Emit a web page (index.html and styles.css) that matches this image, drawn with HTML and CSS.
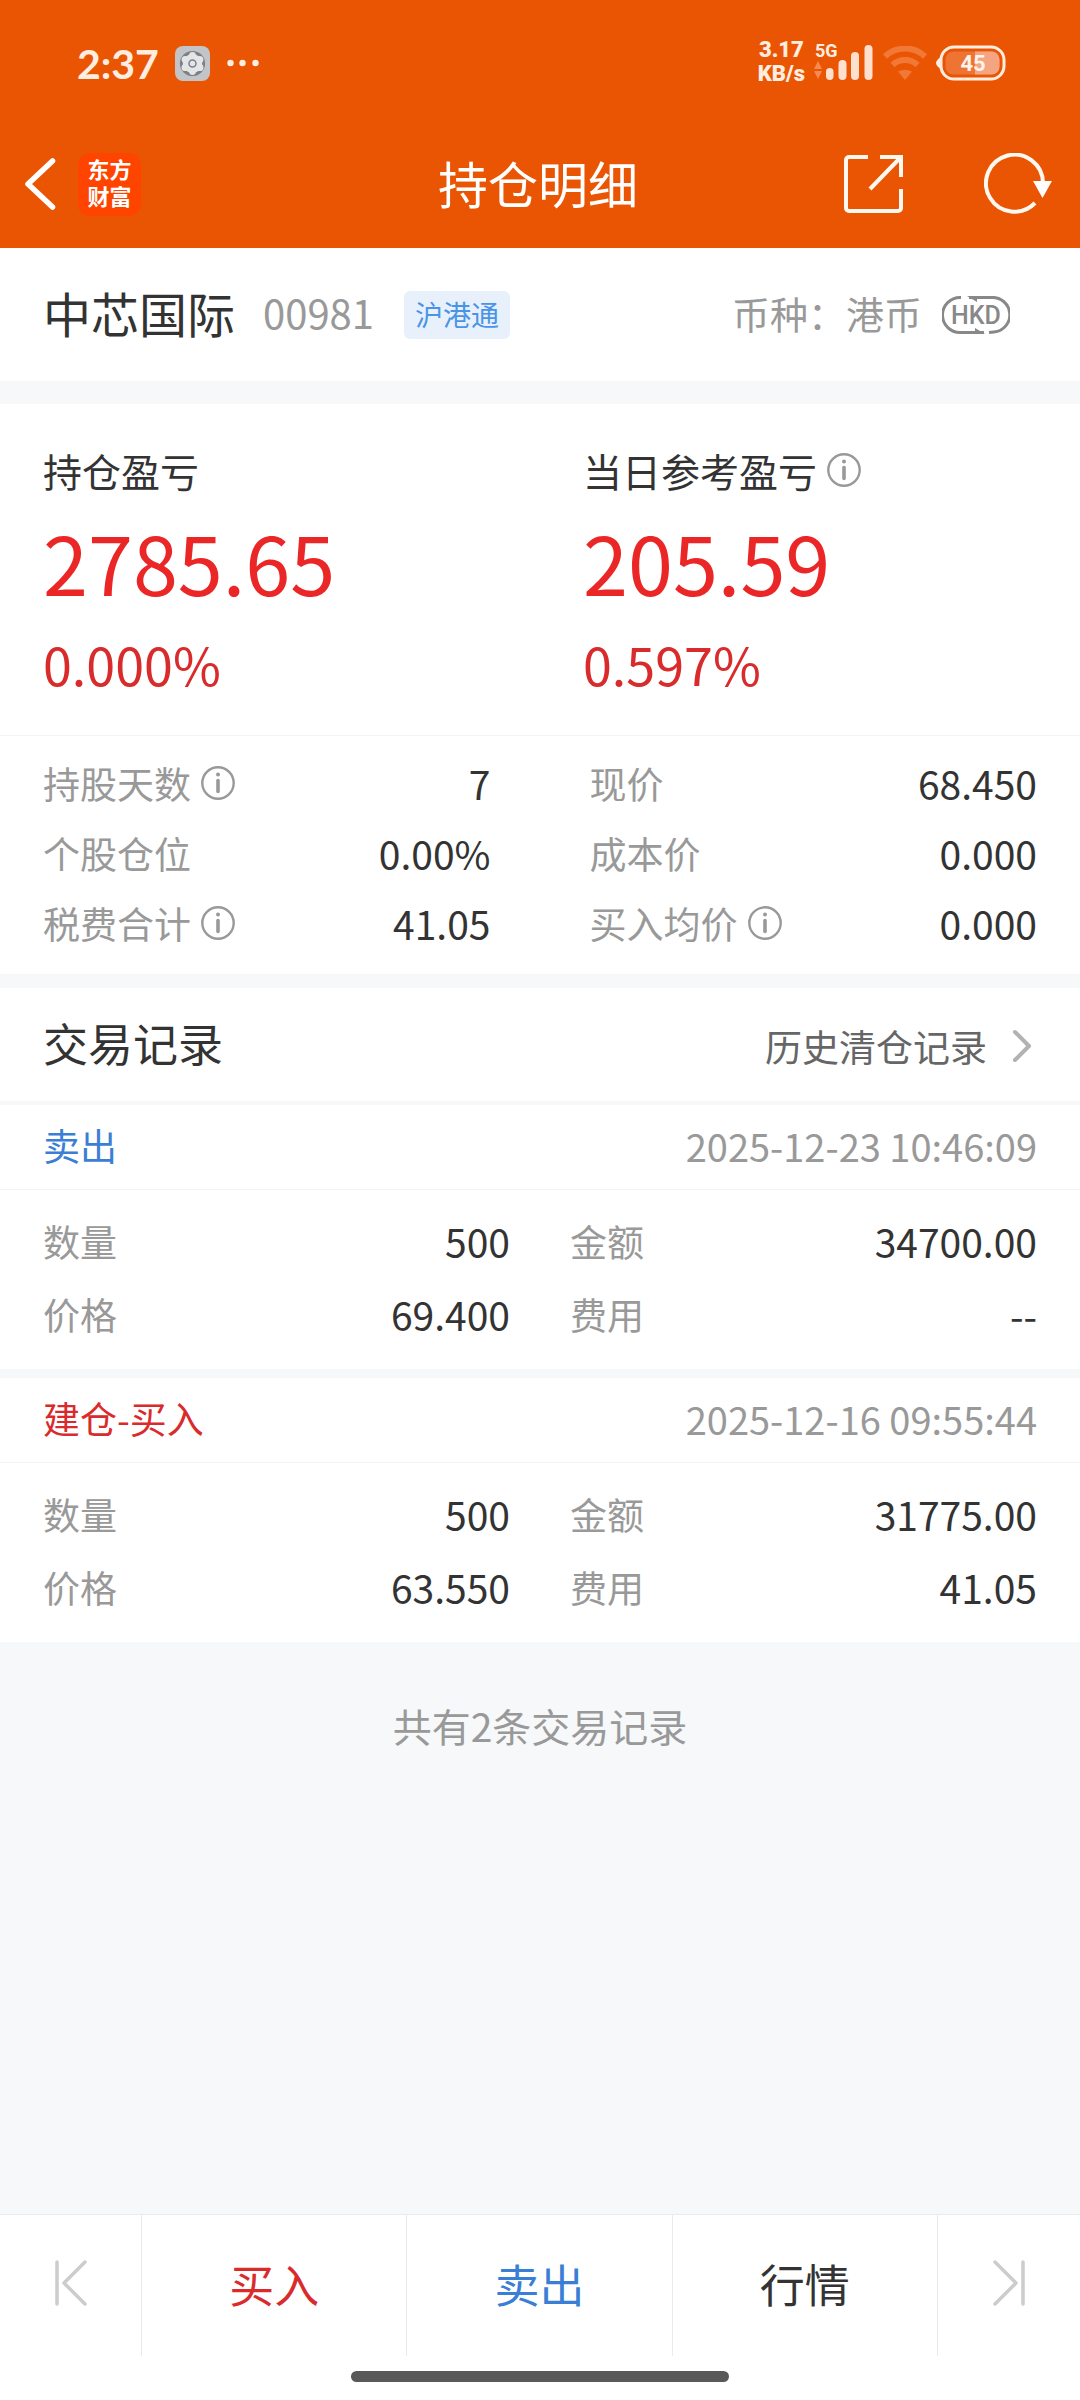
FILE: index.html
```html
<!DOCTYPE html>
<html lang="zh-CN">
<head>
    <meta charset="UTF-8">
    <meta name="viewport" content="width=device-width, initial-scale=1.0">
    <title>持仓明细</title>
    <link rel="stylesheet" href="styles.css">
</head>
<body>
    <!-- shared icons -->
    <svg class="sprite" aria-hidden="true">
        <symbol id="icon-info" viewBox="0 0 34 34">
            <circle cx="17" cy="17" r="15.7" fill="none" stroke="currentColor" stroke-width="2.4"/>
            <circle cx="17" cy="8.6" r="2" fill="currentColor"/>
            <path d="M17 14.5v11" stroke="currentColor" stroke-width="3.6" stroke-linecap="round"/>
        </symbol>
    </svg>

    <header class="top">
        <div class="status-bar">
            <span class="time">2:37</span>
            <svg class="app-icon" width="35" height="35" viewBox="0 0 35 35">
                <rect width="35" height="35" rx="8" fill="#c3c4c8"/>
                <circle cx="17.5" cy="17.5" r="11.7" fill="#7d8087" stroke="#7d8087" stroke-width="1.8"/>
                <g fill="#e4e5e6">
                    <circle cx="17.5" cy="17.5" r="9.6"/>
                    <circle cx="17.5" cy="9.5" r="3.4"/><circle cx="17.5" cy="25.5" r="3.4"/>
                    <circle cx="10.2" cy="13.6" r="3.6"/><circle cx="24.8" cy="13.6" r="3.6"/>
                    <circle cx="10.2" cy="21.4" r="3.6"/><circle cx="24.8" cy="21.4" r="3.6"/>
                </g>
                <circle cx="17.5" cy="17.5" r="3.5" fill="#e4e5e6" stroke="#7d8087" stroke-width="1.5"/>
            </svg>
            <svg class="more" width="32" height="8" viewBox="0 0 32 8" fill="#ffede0">
                <circle cx="3.5" cy="4" r="3.2"/><circle cx="15.5" cy="4" r="3.2"/><circle cx="28.5" cy="4" r="3.2"/>
            </svg>
            <div class="status-right">
                <div class="speed"><span>3.17</span><span>KB/s</span></div>
                <svg width="60" height="48" viewBox="0 0 60 48">
                    <text class="net" x="1" y="18">5G</text>
                    <path d="M0 30l4-8 4 8zM0 32l4 8 4-8z" fill="#f58a52"/>
                    <g fill="#ffdfce">
                        <rect x="12" y="29" width="7.5" height="12" rx="3.7"/>
                        <rect x="24.5" y="21" width="8" height="20" rx="4"/>
                        <rect x="37" y="13" width="8" height="28" rx="4"/>
                        <rect x="50.5" y="6" width="8" height="35" rx="4"/>
                    </g>
                </svg>
                <svg width="44" height="34" viewBox="0 0 44 34">
                    <g fill="none" stroke="#f27835" stroke-width="6">
                        <path d="M2 10.5a29 29 0 0 1 40 0"/>
                        <path d="M9.5 19a18 18 0 0 1 25 0"/>
                    </g>
                    <path d="M15 25.5q7-3.5 14 0L22 34z" fill="#f27835"/>
                </svg>
                <svg width="70" height="36" viewBox="0 0 70 36">
                    <path d="M4 12.5q-4 3-4 5.5t4 5.5z" fill="#ffede0"/>
                    <rect x="5" y="2" width="63" height="32" rx="13" fill="none" stroke="#ffede0" stroke-width="3"/>
                    <rect x="9.5" y="6.5" width="54" height="23" rx="8" fill="#ee7434"/>
                    <path d="M39 6.5h16.5a8 8 0 0 1 8 8v7a8 8 0 0 1-8 8H39z" fill="#f4a480"/>
                    <text class="battery" x="37" y="26" text-anchor="middle">45</text>
                </svg>
            </div>
        </div>
        <nav class="nav-bar">
            <div class="nav-side">
                <button type="button" aria-label="返回">
                    <svg width="32" height="52" viewBox="0 0 32 52"><path d="M28.5 3L4 26l24.5 23" fill="none" stroke="#fff" stroke-width="5.5" stroke-linecap="round" stroke-linejoin="round"/></svg>
                </button>
                <a class="logo" href="#"><span>东方</span><span>财富</span></a>
            </div>
            <h1>持仓明细</h1>
            <div class="nav-side nav-actions">
                <button type="button" aria-label="分享">
                    <svg width="60" height="60" viewBox="0 0 60 60"><path d="M24 3H5a3 3 0 0 0-3 3v48a3 3 0 0 0 3 3h49a3 3 0 0 0 3-3V35M36 3h21v20M57 3L26 35" fill="none" stroke="#fff8f0" stroke-width="4"/></svg>
                </button>
                <button type="button" aria-label="刷新">
                    <svg width="68" height="62" viewBox="0 0 68 62"><path d="M51 50A28.5 28.5 0 1 1 59 30" fill="none" stroke="#fff8f0" stroke-width="4"/><path d="M49 28h19l-9.5 17z" fill="#fff"/></svg>
                </button>
            </div>
        </nav>
    </header>

    <main>
        <section class="stock">
            <h2>中芯国际</h2>
            <span class="code">00981</span>
            <span class="tag">沪港通</span>
            <span class="currency">币种：港币</span>
            <svg width="68" height="38" viewBox="0 0 68 38">
                <path d="M19 1.5h-1a17 17 0 0 0 0 35h24M27 1.5h22a17 17 0 0 1 3 34.5l-5 .5" fill="none" stroke="#888" stroke-width="3"/>
                <path d="M25 0h10v6zM43 38H33v-6z" fill="#888"/>
                <text class="hkd" x="34" y="28" text-anchor="middle">HKD</text>
            </svg>
        </section>

        <section class="profit">
            <div>
                <h3>持仓盈亏</h3>
                <p class="amount">2785.65</p>
                <p class="percent">0.000%</p>
            </div>
            <div>
                <h3>当日参考盈亏 <button type="button" class="info" aria-label="说明"><svg width="34" height="34"><use href="#icon-info"/></svg></button></h3>
                <p class="amount">205.59</p>
                <p class="percent">0.597%</p>
            </div>
        </section>

        <dl class="detail">
            <div class="pair"><dt>持股天数 <button type="button" class="info" aria-label="说明"><svg width="34" height="34"><use href="#icon-info"/></svg></button></dt><dd>7</dd></div>
            <div class="pair"><dt>现价</dt><dd>68.450</dd></div>
            <div class="pair"><dt>个股仓位</dt><dd>0.00%</dd></div>
            <div class="pair"><dt>成本价</dt><dd>0.000</dd></div>
            <div class="pair"><dt>税费合计 <button type="button" class="info" aria-label="说明"><svg width="34" height="34"><use href="#icon-info"/></svg></button></dt><dd>41.05</dd></div>
            <div class="pair"><dt>买入均价 <button type="button" class="info" aria-label="说明"><svg width="34" height="34"><use href="#icon-info"/></svg></button></dt><dd>0.000</dd></div>
        </dl>

        <section class="records-head">
            <h2>交易记录</h2>
            <a href="#">历史清仓记录
                <svg width="20" height="34" viewBox="0 0 20 34"><path d="M3 3l14 14L3 31" fill="none" stroke="#b2b2b2" stroke-width="4" stroke-linecap="round" stroke-linejoin="round"/></svg>
            </a>
        </section>

        <article class="record">
            <div class="record-title">
                <h3 class="sell">卖出</h3>
                <time>2025-12-23 10:46:09</time>
            </div>
            <dl>
                <div class="pair"><dt>数量</dt><dd>500</dd></div>
                <div class="pair"><dt>金额</dt><dd>34700.00</dd></div>
                <div class="pair"><dt>价格</dt><dd>69.400</dd></div>
                <div class="pair"><dt>费用</dt><dd>--</dd></div>
            </dl>
        </article>

        <article class="record">
            <div class="record-title">
                <h3 class="buy">建仓-买入</h3>
                <time>2025-12-16 09:55:44</time>
            </div>
            <dl>
                <div class="pair"><dt>数量</dt><dd>500</dd></div>
                <div class="pair"><dt>金额</dt><dd>31775.00</dd></div>
                <div class="pair"><dt>价格</dt><dd>63.550</dd></div>
                <div class="pair"><dt>费用</dt><dd>41.05</dd></div>
            </dl>
        </article>

        <p class="total">共有2条交易记录</p>
    </main>

    <footer>
        <div class="tab-bar">
            <button type="button" aria-label="上一只">
                <svg width="32" height="46" viewBox="0 0 32 46"><path d="M2 2v42M30 2L9 23l21 21" fill="none" stroke="#ccc" stroke-width="3.5" stroke-linecap="round" stroke-linejoin="round"/></svg>
            </button>
            <button type="button" class="buy">买入</button>
            <button type="button" class="sell">卖出</button>
            <button type="button">行情</button>
            <button type="button" aria-label="下一只">
                <svg width="32" height="46" viewBox="0 0 32 46"><path d="M30 2v42M2 2l21 21L2 44" fill="none" stroke="#ccc" stroke-width="3.5" stroke-linecap="round" stroke-linejoin="round"/></svg>
            </button>
        </div>
        <div class="home-line"></div>
    </footer>
</body>
</html>
```
FILE: styles.css
```css
* {
    box-sizing: border-box;
}
body {
    display: flex;
    flex-direction: column;
    min-height: 100vh;
    margin: 0;
    background: #f6f8fa;
    color: #333;
    font-family: "Noto Sans CJK SC", sans-serif;
    font-size: 37px;
}
h1, h2, h3, p, dl, dd {
    margin: 0;
    font-weight: 400;
}
button {
    padding: 0;
    border: none;
    background: none;
    color: inherit;
    font: inherit;
    cursor: pointer;
}
a {
    color: inherit;
    text-decoration: none;
}
svg {
    display: block;
    flex: none;
}
.sprite {
    position: absolute;
    width: 0;
    height: 0;
}
.buy {
    color: #d92b2b;
}
.sell {
    color: #3a7fd5;
}

/* header */
.top {
    background: #ea5504;
    color: #fff;
}
.status-bar {
    display: flex;
    align-items: center;
    height: 126px;
    padding: 0 74px 0 77px;
    color: #ffede0;
    font-family: Lato, sans-serif;
    font-weight: 700;
}
.time {
    font-size: 41px;
}
.app-icon {
    margin-left: 16px;
}
.more {
    margin-left: 17px;
}
.status-right {
    display: flex;
    align-items: center;
    gap: 9px;
    margin-left: auto;
}
.speed {
    display: flex;
    flex-direction: column;
    align-items: center;
    padding-bottom: 3px;
    font-family: Roboto, sans-serif;
    font-size: 22px;
    line-height: 24px;
    font-weight: 900;
}
.net {
    fill: #ffede0;
    font-family: Roboto, sans-serif;
    font-size: 18px;
}
.battery {
    fill: #fff4ec;
    font-family: Roboto, sans-serif;
    font-size: 22px;
}
.nav-bar {
    display: flex;
    align-items: center;
    height: 122px;
    padding: 0 28px 6px 24px;
}
.nav-side {
    display: flex;
    flex: 1;
    align-items: center;
    gap: 22px;
}
.nav-actions {
    justify-content: flex-end;
    gap: 80px;
}
.nav-bar h1 {
    padding-bottom: 5px;
    font-size: 50px;
    line-height: 60px;
}
.logo {
    display: flex;
    flex-direction: column;
    align-items: center;
    justify-content: center;
    width: 63px;
    height: 63px;
    border-radius: 12px;
    background: #ff4400;
    font-family: "Liberation Sans", "Noto Sans CJK SC", sans-serif;
    font-size: 22px;
    line-height: 27px;
    font-weight: 700;
}

/* stock name */
.stock {
    display: flex;
    align-items: center;
    height: 133px;
    padding: 0 70px 0 43px;
    background: #fff;
}
.stock h2 {
    padding-bottom: 5px;
    font-size: 48px;
}
.code {
    padding-bottom: 5px;
    margin-left: 28px;
    color: #999;
    font-size: 40px;
}
.tag {
    margin-left: 30px;
    padding: 0 11px 2px;
    border-radius: 6px;
    background: #e8f1fb;
    color: #4a94e8;
    font-size: 28px;
    line-height: 46px;
}
.currency {
    margin: 0 20px 0 auto;
    padding-bottom: 5px;
    color: #999;
    font-size: 38px;
}
.hkd {
    fill: #888;
    font-family: Roboto, sans-serif;
    font-size: 25px;
    font-weight: 500;
}

/* profit */
.profit {
    display: grid;
    grid-template-columns: 1fr 1fr;
    margin-top: 23px;
    padding: 36px 0 29px;
    border-bottom: 1px solid #f2f3f5;
    background: #fff;
}
.profit > div {
    padding-left: 43px;
}
.profit h3 {
    display: flex;
    align-items: center;
    gap: 10px;
    font-size: 39px;
    line-height: 60px;
}
.info {
    color: #999;
}
.amount {
    color: #eb2626;
    font-size: 81px;
    line-height: 122px;
}
.percent {
    color: #d92b2b;
    font-size: 52px;
    line-height: 84px;
}

/* label and value pairs */
.pair {
    display: flex;
    align-items: center;
    justify-content: space-between;
}
.pair dt {
    display: flex;
    align-items: center;
    gap: 10px;
    color: #999;
}
.pair dd {
    font-size: 39px;
}
.detail {
    display: grid;
    grid-template-columns: 1fr 1fr;
    grid-auto-rows: 70px;
    column-gap: 99px;
    padding: 12px 43px 16px;
    background: #fff;
}

/* records */
.records-head {
    display: flex;
    align-items: center;
    justify-content: space-between;
    height: 113px;
    margin-top: 14px;
    padding: 0 48px 0 43px;
    background: #fff;
}
.records-head h2 {
    padding-bottom: 4px;
    font-size: 45px;
}
.records-head a {
    display: flex;
    align-items: center;
    gap: 25px;
    padding-top: 2px;
    color: #666;
}
.record {
    margin-top: 4px;
    background: #fff;
}
.record + .record {
    margin-top: 9px;
}
.record-title {
    display: flex;
    align-items: center;
    justify-content: space-between;
    height: 85px;
    padding: 0 43px 4px;
    border-bottom: 1px solid #f2f3f5;
}
.record-title h3 {
    font-size: 37px;
}
.record-title time {
    color: #999;
    font-size: 38px;
}
.record dl {
    display: grid;
    grid-template-columns: 1fr 1fr;
    grid-auto-rows: 73px;
    column-gap: 60px;
    padding: 14px 43px 19px;
}
.total {
    padding-top: 55px;
    color: #999;
    font-size: 39px;
    line-height: 56px;
    text-align: center;
}

/* bottom bar */
footer {
    margin-top: auto;
    background: #fff;
}
.tab-bar {
    display: grid;
    grid-template-columns: 142px 1fr 1fr 1fr 142px;
    height: 142px;
    border-top: 1px solid #ebebeb;
    font-size: 45px;
}
.tab-bar button {
    display: flex;
    align-items: center;
    justify-content: center;
    padding-bottom: 5px;
    border-right: 1px solid #ebebeb;
}
.tab-bar button:last-child {
    border-right: none;
}
.home-line {
    width: 35%;
    height: 11px;
    margin: 15px auto 18px;
    border-radius: 6px;
    background: #595959;
}
```
